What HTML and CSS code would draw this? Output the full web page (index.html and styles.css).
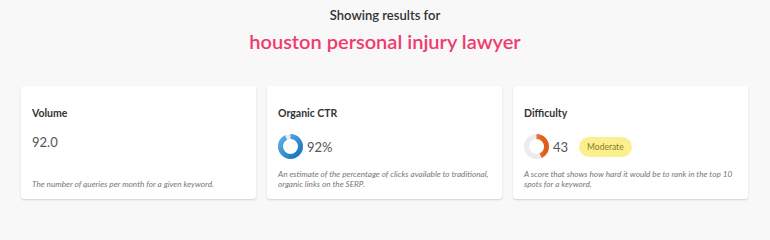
FILE: index.html
```html
<!DOCTYPE html>
<html lang="en">
<head>
<meta charset="utf-8">
<title>Keyword results</title>
<link rel="stylesheet" href="styles.css">
</head>
<body>
<header class="head">
  <div class="head-sub">Showing results for</div>
  <h1 class="head-kw">houston personal injury lawyer</h1>
</header>
<main class="cards">
  <section class="card">
    <h2 class="card-title">Volume</h2>
    <div class="metric"><span class="metric-val">92.0</span></div>
    <p class="card-desc">The number of queries per month for a given keyword.</p>
  </section>
  <section class="card">
    <h2 class="card-title">Organic CTR</h2>
    <div class="metric">
      <svg class="donut" width="25" height="25" viewBox="0 0 25 25">
        <defs>
          <linearGradient id="gBlue" x1="1" y1="0" x2="0" y2="1">
            <stop offset="0" stop-color="#5cb2e6"/>
            <stop offset="1" stop-color="#1470bd"/>
          </linearGradient>
        </defs>
        <circle cx="12.5" cy="12.5" r="10" fill="none" stroke="#ececec" stroke-width="5"/>
        <circle cx="12.5" cy="12.5" r="10" fill="none" stroke="url(#gBlue)" stroke-width="5" stroke-dasharray="57.8 62.83" transform="rotate(-90 12.5 12.5)"/>
      </svg>
      <span class="metric-val">92%</span>
    </div>
    <p class="card-desc">An estimate of the percentage of clicks available to traditional, organic links on the SERP.</p>
  </section>
  <section class="card">
    <h2 class="card-title">Difficulty</h2>
    <div class="metric">
      <svg class="donut" width="25" height="25" viewBox="0 0 25 25">
        <defs>
          <linearGradient id="gOrange" x1="0" y1="0" x2="0" y2="1">
            <stop offset="0" stop-color="#f08a4e"/>
            <stop offset="1" stop-color="#de5a18"/>
          </linearGradient>
        </defs>
        <circle cx="12.5" cy="12.5" r="10" fill="none" stroke="#ececec" stroke-width="5"/>
        <circle cx="12.5" cy="12.5" r="10" fill="none" stroke="url(#gOrange)" stroke-width="5" stroke-dasharray="27.0 62.83" transform="rotate(-90 12.5 12.5)"/>
      </svg>
      <span class="metric-val">43</span>
      <span class="badge">Moderate</span>
    </div>
    <p class="card-desc">A score that shows how hard it would be to rank in the top 10 spots for a keyword.</p>
  </section>
</main>
</body>
</html>
```
FILE: styles.css
```css
html, body {
  margin: 0;
  padding: 0;
}
body {
  background: #f8f8f8;
  font-family: Lato, "Open Sans", sans-serif;
  color: #333;
  width: 770px;
  height: 212px;
  overflow: hidden;
}
.head {
  text-align: center;
  padding-top: 7px;
}
.head-sub {
  font-size: 13px;
  line-height: 17px;
  font-weight: 600;
  color: #333;
}
.head-kw {
  margin: 4px 0 0;
  font-size: 20px;
  line-height: 26px;
  font-weight: 600;
  color: #ef3b6d;
}
.cards {
  display: grid;
  grid-template-columns: repeat(3, 1fr);
  gap: 11px;
  margin: 32px 22px 0 21px;
}
.card {
  background: #fff;
  border-radius: 3px;
  box-shadow: 0 1px 2px rgba(0, 0, 0, 0.16);
  height: 113px;
  box-sizing: border-box;
  padding: 20px 4px 10px 11px;
  display: flex;
  flex-direction: column;
}
.card-title {
  margin: 0;
  font-size: 10.5px;
  line-height: 14px;
  font-weight: 700;
  color: #333;
}
.metric {
  margin-top: 14px;
  display: flex;
  align-items: center;
}
.metric-val {
  font-size: 13px;
  line-height: 16px;
  color: #555;
}
.donut {
  display: block;
  margin-right: 4px;
}
.badge {
  margin-left: 11px;
  height: 20px;
  padding: 0 8px;
  border-radius: 10px;
  background: #fcef8f;
  color: #8a7d1e;
  font-size: 8.5px;
  line-height: 20px;
}
.card-desc {
  margin: auto 0 0;
  font-size: 8.2px;
  line-height: 9.5px;
  font-style: italic;
  color: #777;
}
```
